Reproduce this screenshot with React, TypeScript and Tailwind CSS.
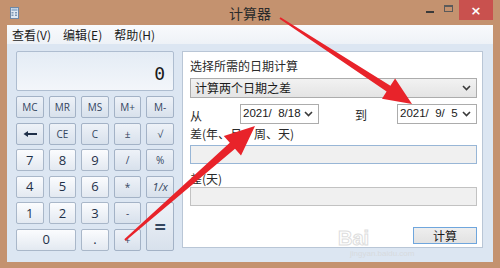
import React from "react";

const cjk = "font-['Microsoft_YaHei','Noto_Sans_CJK_SC',sans-serif]";

function Btn({ children, kind = "num", className = "" }: { children: React.ReactNode; kind?: "num" | "op"; className?: string }) {
  const k =
    kind === "num"
      ? "border-[#a9b7c9] bg-linear-to-b from-[#fbfcfe] to-[#e3e9f1] text-[#1f3049] text-[13px]"
      : "border-[#a3b2c6] bg-linear-to-b from-[#eef2f8] to-[#d8e1ec] text-[#34465f] text-[10px]";
  return (
    <div className={`flex items-center justify-center rounded-[2px] border font-['Open_Sans','Noto_Sans',sans-serif] leading-none ${k} ${className}`}>
      {children}
    </div>
  );
}

function Chevron() {
  return (
    <svg width="9" height="6" viewBox="0 0 9 6" className="shrink-0">
      <path d="M1 1 L4.5 4.5 L8 1" fill="none" stroke="#3a3a3a" strokeWidth="1.6" />
    </svg>
  );
}

export default function App() {
  return (
    <div className={`relative w-[500px] h-[268px] overflow-hidden bg-[#c4926f] flex flex-col ${cjk}`}>
      {/* title bar */}
      <div className="h-[25px] flex items-start">
        <div className="w-[85px] h-full flex items-center pl-[10px]">
          <svg width="9" height="12" viewBox="0 0 9 12">
            <rect x="0.5" y="0.5" width="8" height="11" fill="#dfe8f2" stroke="#6f88a6" />
            <rect x="1.5" y="1.5" width="6" height="2.5" fill="#9fb6d0" />
            <rect x="1.5" y="5" width="2" height="1.5" fill="#7d96b4" />
            <rect x="5" y="5" width="2" height="1.5" fill="#7d96b4" />
            <rect x="1.5" y="7.5" width="2" height="1.5" fill="#7d96b4" />
            <rect x="5" y="7.5" width="2" height="1.5" fill="#7d96b4" />
          </svg>
        </div>
        <div className="flex-1 h-full flex items-center justify-center text-[14px] text-[#2b2b2b] pt-[1px]">计算器</div>
        <div className="w-[85px] flex items-start pr-[7px]">
          <div className="w-[18px] h-[20px] flex items-center justify-center ml-[6px]">
            <div className="w-[8px] h-[2px] bg-[#3a3a3a] mt-[4px]" />
          </div>
          <div className="w-[22px] h-[20px] flex items-center justify-center">
            <div className="w-[9px] h-[7px] border border-[#5a5a5a] border-t-2 mb-[3px]" />
          </div>
          <div className="w-[36px] h-[20px] bg-[#c9514e] flex items-center justify-center text-white text-[13px] font-['DejaVu_Sans',sans-serif] font-bold leading-none">
            ×
          </div>
        </div>
      </div>

      {/* body */}
      <div className="flex-1 mx-[7px] mb-[6px] flex flex-col">
        <div className="h-[19px] bg-linear-to-b from-[#f9fafc] to-[#eef2f7] flex items-center gap-[12px] pl-[5px] text-[12px] text-[#1b1b1b]">
          <span>查看(V)</span>
          <span>编辑(E)</span>
          <span>帮助(H)</span>
        </div>
        <div className="flex-1 bg-[#dce6f2] flex pl-[9px] pt-[7px] gap-[8px]">
          {/* calculator */}
          <div className="w-[158px] flex flex-col gap-[5px]">
            <div className="h-[40px] rounded-[2px] border border-[#aebdd0] bg-linear-to-b from-[#e4ecf5] to-[#f3f6fa] flex items-end justify-end pr-[8px] pb-[7px]">
              <span className="text-[18px] leading-none text-[#1a1a1a] font-['DejaVu_Sans_Mono',monospace]">0</span>
            </div>
            <div className="grid grid-cols-5 grid-rows-[repeat(6,22px)] gap-x-[5px] gap-y-[4.6px]">
              <Btn kind="op">MC</Btn>
              <Btn kind="op">MR</Btn>
              <Btn kind="op">MS</Btn>
              <Btn kind="op">M+</Btn>
              <Btn kind="op">M-</Btn>

              <Btn kind="op">
                <svg width="14" height="6" viewBox="0 0 14 6">
                  <path d="M0.5 3 L5 0 L5 6 Z" fill="#1f3049" />
                  <rect x="4" y="2" width="10" height="2" fill="#1f3049" />
                </svg>
              </Btn>
              <Btn kind="op">CE</Btn>
              <Btn kind="op">C</Btn>
              <Btn kind="op">±</Btn>
              <Btn kind="op">√</Btn>

              <Btn>7</Btn>
              <Btn>8</Btn>
              <Btn>9</Btn>
              <Btn kind="op">/</Btn>
              <Btn kind="op">%</Btn>

              <Btn>4</Btn>
              <Btn>5</Btn>
              <Btn>6</Btn>
              <Btn kind="op">*</Btn>
              <Btn kind="op" className="font-['Liberation_Serif',serif] italic text-[11px]">1/x</Btn>

              <Btn>1</Btn>
              <Btn>2</Btn>
              <Btn>3</Btn>
              <Btn kind="op">-</Btn>
              <Btn kind="op" className="row-span-2 text-[20px] font-bold">=</Btn>

              <Btn className="col-span-2">0</Btn>
              <Btn>.</Btn>
              <Btn kind="op">+</Btn>
            </div>
          </div>

          {/* date panel */}
          <div className="w-[301px] h-[197px] bg-white border border-[#b9c6d6] pl-[7px] pr-[5px] pt-[6px] flex flex-col text-[12px] text-[#2a2a2a]">
            <div className="h-[16px] leading-[16px]">选择所需的日期计算</div>
            <div className="mt-[4px] h-[20px] border border-[#acacac] bg-linear-to-b from-[#f2f2f2] to-[#e4e4e4] flex items-center justify-between pl-[4px] pr-[5px]">
              <span className="text-[12px] text-[#1a1a1a]">计算两个日期之差</span>
              <Chevron />
            </div>
            <div className="mt-[6px] h-[20px] flex items-center">
              <span className="w-[50px] pt-[4px]">从</span>
              <div className="w-[79px] h-[20px] border border-[#acacac] flex items-center justify-between pl-[2px] pr-[5px] bg-white">
                <span className="text-[11.5px] font-['Liberation_Sans',sans-serif] text-[#1a1a1a] whitespace-pre">2021/  8/18</span>
                <Chevron />
              </div>
              <span className="ml-[36px] w-[42px] pt-[2px]">到</span>
              <div className="w-[80px] h-[20px] border border-[#acacac] flex items-center justify-between pl-[2px] pr-[5px] bg-white">
                <span className="text-[11.5px] font-['Liberation_Sans',sans-serif] text-[#1a1a1a] whitespace-pre">2021/  9/  5</span>
                <Chevron />
              </div>
            </div>
            <div className="mt-[2px] h-[16px] leading-[16px]">差(年、月、周、天)</div>
            <div className="mt-[3px] h-[19px] border border-[#98b6d6] bg-[#f0f0f0]" />
            <div className="mt-[7px] h-[16px] leading-[16px]">差(天)</div>
            <div className="mt-[0px] h-[19px] border border-[#c2c2c2] bg-[#f0f0f0]" />
            <div className="mt-[21px] flex justify-end">
              <div className="w-[64px] h-[17px] border border-[#6fa6dd] bg-linear-to-b from-[#eeeeee] to-[#e2e2e2] flex items-center justify-center text-[12px] text-[#1a1a1a]">
                计算
              </div>
            </div>
          </div>
        </div>
      </div>

      {/* watermark */}
      <div className="absolute left-[338px] top-[226px] pointer-events-none opacity-60">
        <span className="text-[20px] leading-none font-['Liberation_Sans',sans-serif] font-bold text-white [-webkit-text-stroke:1px_#c8c8c8]">Bai</span>
      </div>
      <div className="absolute left-[350px] top-[250px] text-[8px] leading-none text-[#d6d6d6] font-['Liberation_Sans',sans-serif] opacity-70">jingyan.baidu.com</div>

      {/* red annotation arrows */}
      <svg className="absolute left-0 top-0 pointer-events-none" width="500" height="268" viewBox="0 0 500 268">
        <polygon
          points="280.5,17.2 390.4,85.8 395.1,78.6 412,104 382,98.8 386.6,91.6 279.5,18.8"
          fill="#e8232a"
        />
        <polygon
          points="124.3,239.3 229.8,142.8 223.8,136 255,126 241,155.6 235,148.8 125.7,240.8"
          fill="#e8232a"
        />
      </svg>
    </div>
  );
}
